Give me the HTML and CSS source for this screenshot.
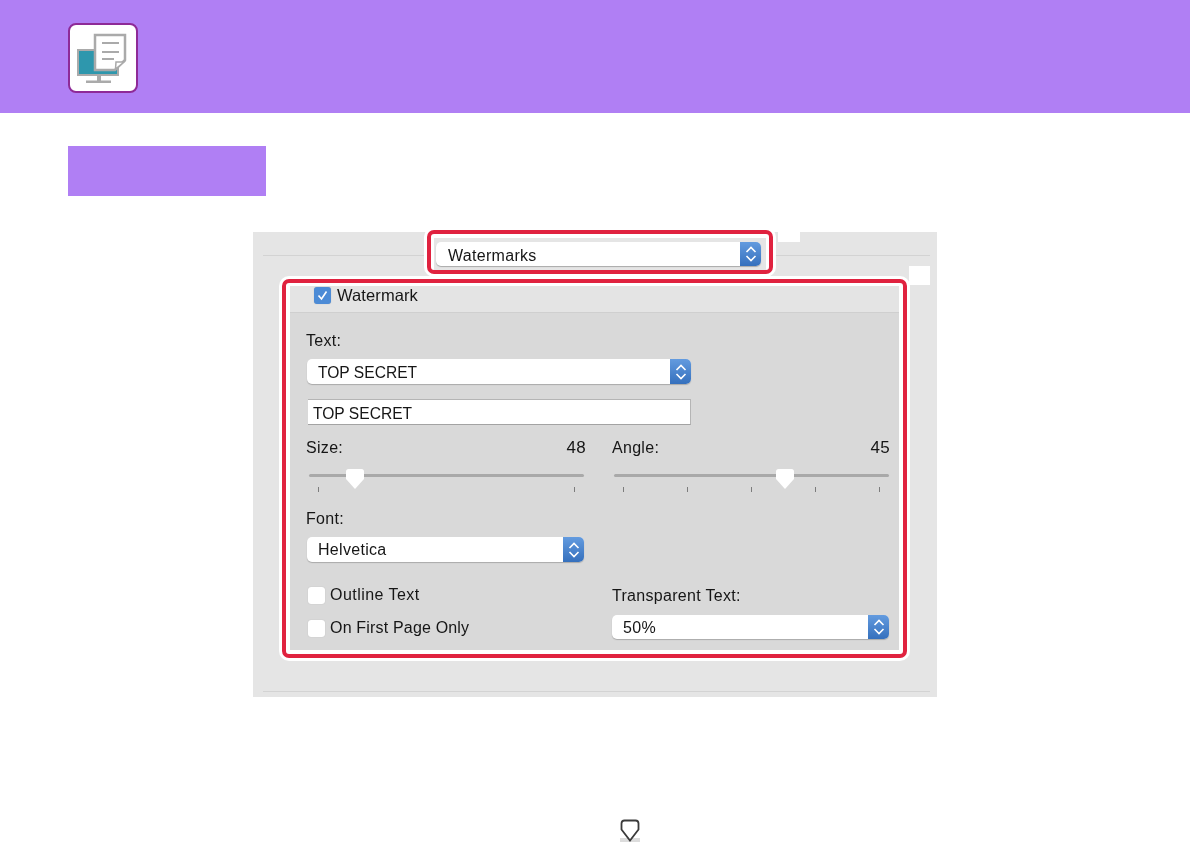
FILE: index.html
```html
<!DOCTYPE html>
<html lang="en">
<head>
<meta charset="utf-8">
<title>Watermarks</title>
<link rel="stylesheet" href="styles.css">
</head>
<body>
<header class="banner">
  <div class="app-icon">
    <svg width="66" height="66" viewBox="2 2 66 66" aria-hidden="true">
      <rect x="10" y="27" width="40" height="25" fill="#2e97ad" stroke="#aaa" stroke-width="2"/>
      <rect x="29" y="52" width="4" height="6" fill="#aaa"/>
      <rect x="18" y="57.500" width="25" height="2.500" fill="#aaa"/>
      <path d="M27 12H57V37L47 47H27Z" fill="#fff" stroke="#aaa" stroke-width="2.500"/>
      <path d="M34 20H51M34 29H51M34 36H46" stroke="#aaa" stroke-width="2" fill="none"/>
      <path d="M47.500 46L48 39H56Z" fill="#fff" stroke="#aaa" stroke-width="1.500"/>
    </svg>
  </div>
</header>
<div class="subbar"></div>
<main class="dialog">
  <div class="top-row">
    <div class="rule rule-left"></div>
    <div class="callout callout-top">
      <div class="callout-inner">
        <div class="popup popup-main">
          <span class="popup-text">Watermarks</span>
          <span class="stepper"><svg width="12" height="18" viewBox="0 0 12 18"><path d="M1.500 7L6 2.500L10.500 7M1.500 11L6 15.500L10.500 11" fill="none" stroke="#fff" stroke-width="1.600"/></svg></span>
        </div>
      </div>
    </div>
    <div class="rule rule-right"></div>
  </div>
  <div class="callout callout-panel">
    <div class="panel">
      <div class="panel-head">
        <span class="checkbox checked"><svg width="17" height="17" viewBox="0 0 17 17"><path d="M4.500 8.500L7.500 12L12.500 4.500" fill="none" stroke="#fff" stroke-width="1.600"/></svg></span>
        <span class="head-label">Watermark</span>
      </div>
      <div class="panel-body">
        <div class="label">Text:</div>
        <div class="popup popup-text-source">
          <span class="popup-text caps">TOP SECRET</span>
          <span class="stepper"><svg width="12" height="18" viewBox="0 0 12 18"><path d="M1.500 7L6 2.500L10.500 7M1.500 11L6 15.500L10.500 11" fill="none" stroke="#fff" stroke-width="1.600"/></svg></span>
        </div>
        <div class="text-input caps">TOP SECRET</div>
        <div class="columns sliders">
          <div class="slider-col">
            <div class="label-row"><span>Size:</span><span class="value">48</span></div>
            <div class="slider slider-left">
              <div class="track"></div>
              <svg class="thumb thumb-size" width="20" height="22" viewBox="0 0 20 22"><path d="M3.500 1H16.500Q19 1 19 3.500V11L10 21L1 11V3.500Q1 1 3.500 1Z" fill="#fff"/></svg>
              <div class="ticks"><i></i><i></i></div>
            </div>
          </div>
          <div class="slider-col">
            <div class="label-row"><span>Angle:</span><span class="value">45</span></div>
            <div class="slider slider-right">
              <div class="track"></div>
              <svg class="thumb thumb-angle" width="20" height="22" viewBox="0 0 20 22"><path d="M3.500 1H16.500Q19 1 19 3.500V11L10 21L1 11V3.500Q1 1 3.500 1Z" fill="#fff"/></svg>
              <div class="ticks"><i></i><i></i><i></i><i></i><i></i></div>
            </div>
          </div>
        </div>
        <div class="font-block">
          <div class="label">Font:</div>
          <div class="popup popup-col">
            <span class="popup-text">Helvetica</span>
            <span class="stepper"><svg width="12" height="18" viewBox="0 0 12 18"><path d="M1.500 7L6 2.500L10.500 7M1.500 11L6 15.500L10.500 11" fill="none" stroke="#fff" stroke-width="1.600"/></svg></span>
          </div>
        </div>
        <div class="columns options">
          <div class="check-col">
            <div class="check-row"><span class="checkbox"></span><span>Outline Text</span></div>
            <div class="check-row"><span class="checkbox"></span><span class="tight">On First Page Only</span></div>
          </div>
          <div class="transparent-col">
            <div class="label">Transparent Text:</div>
            <div class="popup popup-col popup-transparent">
              <span class="popup-text">50%</span>
              <span class="stepper"><svg width="12" height="18" viewBox="0 0 12 18"><path d="M1.500 7L6 2.500L10.500 7M1.500 11L6 15.500L10.500 11" fill="none" stroke="#fff" stroke-width="1.600"/></svg></span>
            </div>
          </div>
        </div>
      </div>
    </div>
  </div>
  <div class="rule rule-bottom"></div>
  <div class="patch patch-a"></div>
  <div class="patch patch-b"></div>
</main>
<footer class="footer-mark">
  <svg width="20" height="23" viewBox="0 0 20 23" aria-hidden="true">
    <rect x="0" y="19" width="20" height="4" fill="#dcdcdc"/>
    <path d="M4.500 1.500H15.500Q18.500 1.500 18.500 4.500V10.500L10 21.500L1.500 10.500V4.500Q1.500 1.500 4.500 1.500Z" fill="#fff" stroke="#3a3a3a" stroke-width="1.800"/>
  </svg>
</footer>
</body>
</html>
```

FILE: styles.css
```css
* { box-sizing: border-box; }
html, body { margin: 0; padding: 0; background: #fff; }
body {
  width: 1190px;
  height: 842px;
  overflow: hidden;
  font-family: "Liberation Sans", Arial, sans-serif;
  font-size: 16px;
  letter-spacing: 0.3px;
  color: #161616;
}
.banner {
  height: 113px;
  padding: 23px 0 0 68px;
  background: #b07ff4;
}
.app-icon {
  width: 70px;
  height: 70px;
  border: 2px solid #8e2a97;
  border-radius: 8px;
  background: #fff;
}
.app-icon svg { display: block; filter: blur(0.4px); }
.subbar {
  width: 198px;
  height: 50px;
  margin: 33px 0 0 68px;
  background: #b07ff4;
}
.dialog {
  position: relative;
  width: 684px;
  height: 465px;
  margin: 36px 0 0 253px;
  background: #e5e5e5;
  filter: blur(0.35px);
}
.top-row {
  display: flex;
  height: 47px;
  padding: 0 7px 0 10px;
}
.rule { height: 1px; background: #d3d3d3; }
.rule-left { width: 164px; margin-top: 23px; }
.rule-right { flex: 1; margin-top: 23px; }
.rule-bottom { margin: 33px 7px 0 10px; }
.callout {
  position: relative;
  border: 4px solid #e0223f;
  border-radius: 7px;
  box-shadow: 0 0 0 3px #fff;
}
.callout-top {
  width: 346px;
  height: 44px;
  margin-top: -2px;
  background: #fff;
}
.callout-inner {
  height: 32px;
  margin: 4px 3px 0;
  padding: 4px 5px 0 2px;
  background: #e5e5e5;
}
.callout-panel {
  width: 625px;
  height: 379px;
  margin-left: 29px;
  padding: 3px 4px 4px;
  background: #fff;
}
.panel { height: 364px; background: #d9d9d9; }
.panel-head {
  display: flex;
  align-items: center;
  gap: 6px;
  height: 27px;
  padding: 0 0 7px 24px;
  background: #e4e4e4;
  border-bottom: 1px solid #cfcfcf;
}
.head-label { font-size: 16.500px; letter-spacing: 0.1px; }
.panel-body { padding: 17px 0 0 16px; }
.label { height: 20px; line-height: 22px; }
.caps { font-size: 15.600px; letter-spacing: 0; }
.popup {
  display: flex;
  align-items: stretch;
  border-radius: 5px;
  background: #fff;
  box-shadow: 0 1px 1px #a9a9a9;
  overflow: hidden;
}
.popup-text {
  flex: 1;
  padding-left: 11px;
  line-height: 27px;
  white-space: nowrap;
}
.stepper {
  display: flex;
  align-items: center;
  justify-content: center;
  width: 21px;
  background: linear-gradient(#639bdf, #3570bd);
}
.popup-main { height: 24px; }
.popup-main .popup-text { padding-left: 12px; }
.popup-text-source {
  width: 384px;
  height: 25px;
  margin: 9px 0 0 1px;
}
.text-input {
  width: 383px;
  height: 26px;
  margin: 15px 0 0 2px;
  padding-left: 5px;
  line-height: 27px;
  background: #fff;
  border: 1px solid #b5b5b5;
  border-bottom-color: #a3a3a3;
  border-left: 0;
}
.columns {
  display: grid;
  grid-template-columns: 280px 278px;
  column-gap: 26px;
}
.sliders { margin-top: 12px; }
.label-row {
  display: flex;
  justify-content: space-between;
  height: 20px;
  line-height: 22px;
}
.value { font-size: 17px; letter-spacing: 0.3px; }
.slider {
  position: relative;
  width: 275px;
  margin-top: 11px;
  padding-top: 6px;
}
.slider-left { margin-left: 3px; }
.slider-right { margin-left: 2px; }
.track { height: 3px; border-radius: 2px; background: #a9a9a9; }
.thumb { position: absolute; top: 0; }
.thumb-size { left: 36px; }
.thumb-angle { left: 161px; }
.ticks {
  display: flex;
  justify-content: space-between;
  height: 5px;
  margin-top: 10px;
  padding: 0 9px;
}
.ticks i { width: 1px; background: #7c7c7c; }
.font-block { width: 280px; margin-top: 16px; }
.popup-col {
  width: 277px;
  height: 25px;
  margin: 9px 0 0 1px;
}
.popup-col .popup-text { line-height: 25px; }
.options { margin-top: 23px; }
.check-row {
  display: flex;
  align-items: center;
  gap: 5px;
  height: 20px;
  margin-left: 2px;
  line-height: 22px;
  letter-spacing: 0.45px;
  white-space: nowrap;
}
.check-row + .check-row { margin-top: 13px; }
.tight { letter-spacing: 0.18px; }
.checkbox {
  flex: none;
  width: 17px;
  height: 17px;
  border-radius: 3px;
  background: #fff;
  box-shadow: 0 0 1px #a9a9a9;
}
.checkbox.checked { background: #4c8bd6; }
.checkbox svg { display: block; }
.popup-transparent {
  height: 24px;
  margin: 10px 0 0;
}
.patch { position: absolute; background: #fff; }
.patch-a { left: 525px; top: 0; width: 22px; height: 10px; }
.patch-b { left: 656px; top: 34px; width: 21px; height: 19px; }
.footer-mark { margin: 122px 0 0 620px; }
.footer-mark svg { display: block; }
```
